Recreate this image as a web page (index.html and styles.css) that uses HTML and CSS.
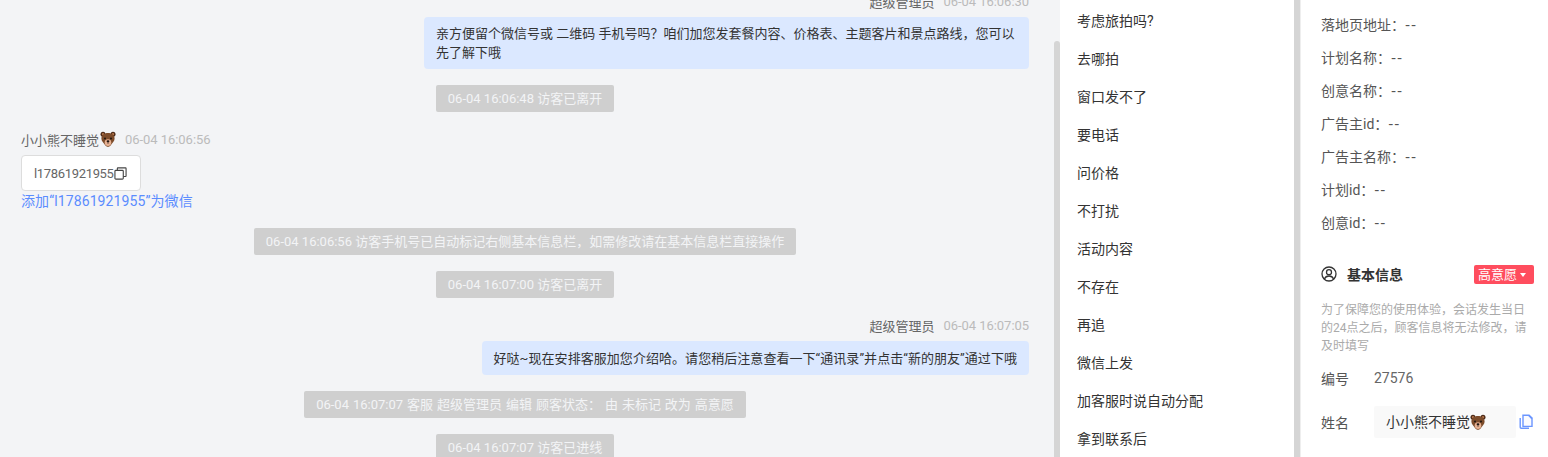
FILE: index.html
```html
<!DOCTYPE html>
<html>
  <head>
    <title>会话详情</title>
    <link rel="stylesheet" href="styles.css">
  </head>
  <body>
    <svg class="defs" width="0" height="0">
      <symbol id="bear" viewBox="0 0 16 16">
        <circle cx="3" cy="3.200" r="2.500" fill="#4e2c1a"/>
        <circle cx="13" cy="3.200" r="2.500" fill="#4e2c1a"/>
        <circle cx="3" cy="3.200" r="1.100" fill="#b9784c"/>
        <circle cx="13" cy="3.200" r="1.100" fill="#b9784c"/>
        <path d="M8 2c4 0 6.600 2.400 6.600 5.800 0 2.600-2.400 4.200-3.600 6.200-.8 1.200-1.800 1.800-3 1.800s-2.200-.6-3-1.800C3.800 12 1.400 10.400 1.400 7.800 1.400 4.400 4 2 8 2z" fill="#7d4c2b"/>
        <ellipse cx="8" cy="11.600" rx="3.300" ry="3.400" fill="#e6b092"/>
        <circle cx="5" cy="7.400" r="1" fill="#1f1410"/>
        <circle cx="11" cy="7.400" r="1" fill="#1f1410"/>
        <ellipse cx="8" cy="10.200" rx="1.400" ry="1" fill="#1f1410"/>
        <path d="M8 11v1.800" stroke="#1f1410" stroke-width=".7"/>
      </symbol>
    </svg>
    <div class="page">
      <div class="chat">
        <div class="chat-list">
          <div class="msg right first">
            <div class="meta"><span>超级管理员</span><span class="time">06-04 16:06:30</span></div>
            <div class="bubble wide">亲方便留个微信号或 二维码 手机号吗？咱们加您发套餐内容、价格表、主题客片和景点路线，您可以先了解下哦</div>
          </div>
          <div class="notice">06-04 16:06:48 访客已离开</div>
          <div class="msg left">
            <div class="meta"><span class="nick">小小熊不睡觉</span><svg class="bear"><use href="#bear"/></svg><span class="time">06-04 16:06:56</span></div>
            <div class="wechat-card">
              <span class="wechat-id">l17861921955</span>
              <svg class="copy-icon" viewBox="0 0 14 14" fill="none" stroke="#444" stroke-width="1.200">
                <rect x="1" y="3.600" width="9" height="9.400" rx="1"/>
                <path d="M3.600 3.600V1.600a.6.6 0 0 1 .6-.6h8.200a.6.6 0 0 1 .6.6v8a.6.6 0 0 1-.6.6H10"/>
              </svg>
            </div>
            <div class="add-link">添加“l17861921955”为微信</div>
          </div>
          <div class="notice">06-04 16:06:56 访客手机号已自动标记右侧基本信息栏，如需修改请在基本信息栏直接操作</div>
          <div class="notice">06-04 16:07:00 访客已离开</div>
          <div class="msg right">
            <div class="meta"><span>超级管理员</span><span class="time">06-04 16:07:05</span></div>
            <div class="bubble">好哒~现在安排客服加您介绍哈。请您稍后注意查看一下“通讯录”并点击“新的朋友”通过下哦</div>
          </div>
          <div class="notice spaced">06-04 16:07:07 客服 超级管理员 编辑 顾客状态： 由 未标记 改为 高意愿</div>
          <div class="notice">06-04 16:07:07 访客已进线</div>
        </div>
        <div class="scroll-thumb"></div>
      </div>

      <div class="replies">
        <div class="reply">考虑旅拍吗?</div>
        <div class="reply">去哪拍</div>
        <div class="reply">窗口发不了</div>
        <div class="reply">要电话</div>
        <div class="reply">问价格</div>
        <div class="reply">不打扰</div>
        <div class="reply">活动内容</div>
        <div class="reply">不存在</div>
        <div class="reply">再追</div>
        <div class="reply">微信上发</div>
        <div class="reply">加客服时说自动分配</div>
        <div class="reply">拿到联系后</div>
      </div>

      <div class="divider"></div>

      <div class="info">
        <div class="ad-row">落地页地址：<span class="dash">--</span></div>
        <div class="ad-row">计划名称：<span class="dash">--</span></div>
        <div class="ad-row">创意名称：<span class="dash">--</span></div>
        <div class="ad-row">广告主id：<span class="dash">--</span></div>
        <div class="ad-row">广告主名称：<span class="dash">--</span></div>
        <div class="ad-row">计划id：<span class="dash">--</span></div>
        <div class="ad-row">创意id：<span class="dash">--</span></div>

        <div class="info-head">
          <svg class="user-icon" viewBox="0 0 16 16" fill="none" stroke="#333" stroke-width="1.300">
            <circle cx="8" cy="8" r="7"/>
            <circle cx="8" cy="6.200" r="2.500"/>
            <path d="M3.400 13c.8-2 2.600-3 4.600-3s3.800 1 4.600 3"/>
          </svg>
          <span class="info-title">基本信息</span>
          <span class="tag">高意愿<i class="caret"></i></span>
        </div>
        <p class="hint">为了保障您的使用体验，会话发生当日的24点之后，顾客信息将无法修改，请及时填写</p>
        <div class="field">
          <span class="field-label">编号</span>
          <span class="field-num">27576</span>
        </div>
        <div class="field name-field">
          <span class="field-label">姓名</span>
          <div class="name-box">小小熊不睡觉<svg class="bear"><use href="#bear"/></svg></div>
          <svg class="doc-icon" viewBox="0 0 14 16" fill="none" stroke="#6b95ff" stroke-width="1.400">
            <path d="M1.200 4v9.300a1 1 0 0 0 1 1H10"/>
            <path d="M4 1.200h6L13 4v8.400H4z" fill="#fbfbff"/>
            <path d="M9.600 1.200L13 4.600" stroke-width="1.600"/>
          </svg>
        </div>
      </div>
    </div>
  </body>
</html>
```

FILE: styles.css
```css
html, body {
  margin: 0;
  height: 100%;
  overflow: hidden;
}
body {
  font-family: Roboto, "Noto Sans CJK SC", sans-serif;
  font-size: 14px;
  color: #333;
  background: #fff;
}
.defs {
  display: block;
  height: 0;
}
.page {
  display: flex;
  height: 457px;
}
.chat {
  position: relative;
  flex: 0 0 1060px;
  font-size: 13px;
  background: #f3f4f6;
  overflow: hidden;
}
.chat-list {
  display: flex;
  flex-direction: column;
  margin-top: -8px;
  padding: 0 31px 0 21px;
}
.scroll-thumb {
  position: absolute;
  top: 41px;
  right: 0;
  bottom: 0;
  width: 6px;
  background: #d5d5d5;
  border-radius: 3px 3px 0 0;
}
.msg {
  display: flex;
  flex-direction: column;
  margin-top: 18px;
}
.msg.first {
  margin-top: 0;
}
.msg.right {
  align-items: flex-end;
}
.msg.left {
  align-items: flex-start;
  padding-bottom: 2px;
}
.meta {
  display: flex;
  align-items: center;
  height: 18px;
  margin-bottom: 7px;
  color: #666;
}
.nick {
  margin-right: 1px;
}
.time {
  margin-left: 9px;
  color: #bbb;
  letter-spacing: -.05px;
}
.bear {
  width: 16px;
  height: 16px;
  vertical-align: -3px;
}
.bubble {
  padding: 8px 12px 7px;
  line-height: 19px;
  letter-spacing: .05px;
  background: #dbe8ff;
  border-radius: 4px;
}
.bubble.wide {
  width: 581px;
  padding: 7px 12px;
  letter-spacing: 0;
}
.notice {
  align-self: center;
  height: 27px;
  margin-top: 16px;
  padding: 0 12px;
  line-height: 27px;
  color: #f3f4f6;
  background: #cfcfcf;
  border-radius: 2px;
  white-space: nowrap;
}
.notice.spaced {
  word-spacing: .75px;
}
.wechat-card {
  display: flex;
  align-items: center;
  width: 120px;
  height: 36px;
  box-sizing: border-box;
  padding-left: 12px;
  color: #666;
  background: #fff;
  border: 1px solid #ddd;
  border-radius: 4px;
}
.wechat-id {
  letter-spacing: -.33px;
}
.copy-icon {
  width: 13px;
  height: 13px;
}
.add-link {
  margin-top: 1px;
  font-size: 14px;
  line-height: 18px;
  letter-spacing: .1px;
  color: #5b8cff;
}
.replies {
  flex: 0 0 234px;
  display: flex;
  flex-direction: column;
  padding-top: 2px;
  box-sizing: border-box;
  overflow: hidden;
}
.reply {
  flex: none;
  height: 38px;
  padding-left: 17px;
  line-height: 38px;
}
.divider {
  flex: 0 0 6px;
  background: #d5d5d5;
}
.info {
  flex: 1;
  padding: 0 14px 0 20px;
  border-left: 1px solid #eee;
  overflow: hidden;
}
.ad-row {
  height: 33px;
  line-height: 33px;
  color: #555;
}
.ad-row:first-child {
  margin-top: 9px;
}
.dash {
  font-family: "DejaVu Sans", sans-serif;
  letter-spacing: 1px;
}
.info-head {
  display: flex;
  align-items: center;
  height: 20px;
  margin-top: 24px;
}
.user-icon {
  width: 16px;
  height: 16px;
}
.info-title {
  margin-left: 10px;
  font-weight: 700;
  color: #333;
}
.tag {
  margin-left: auto;
  padding: 0 8px 0 4px;
  height: 19px;
  font-size: 13px;
  line-height: 19px;
  color: #fff;
  background: #ff4d5e;
  border-radius: 2px;
}
.caret {
  display: inline-block;
  margin-left: 3px;
  vertical-align: 2px;
  border: 3.500px solid transparent;
  border-top: 4px solid #fff;
  border-bottom: 0;
}
.hint {
  margin: 17px 0 0;
  font-size: 12px;
  line-height: 18px;
  color: #aaa;
}
.field {
  display: flex;
  align-items: center;
  margin-top: 13px;
  color: #555;
}
.field-label {
  flex: 0 0 53px;
}
.field-num {
  color: #666;
}
.name-field {
  margin-top: 18px;
}
.name-box {
  width: 142px;
  height: 32px;
  box-sizing: border-box;
  padding-left: 12px;
  line-height: 32px;
  color: #333;
  background: #f9f9f9;
  border-radius: 2px;
}
.doc-icon {
  width: 14px;
  height: 16px;
  margin-left: 3px;
}
```
